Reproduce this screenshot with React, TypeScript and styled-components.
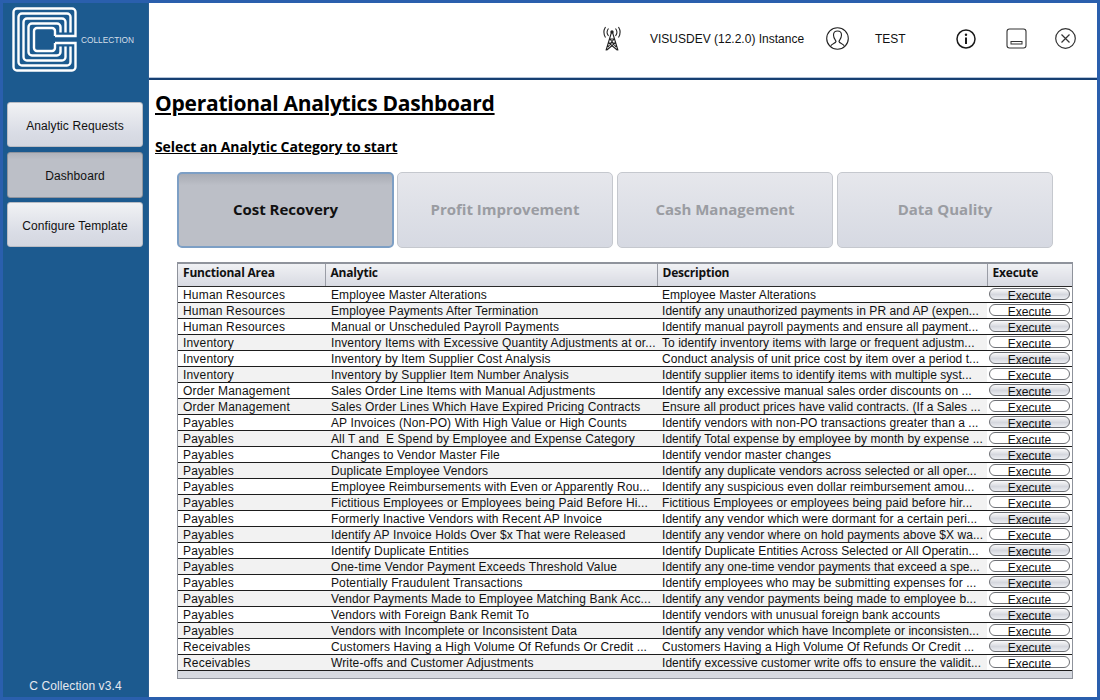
import * as React from 'react';
import styled, { createGlobalStyle } from 'styled-components';

const GlobalStyle = createGlobalStyle`
    html, body {
        margin: 0;
        padding: 0;
        background: #fff;
    }
    * {
        box-sizing: border-box;
    }
`;

const Frame = styled.div`
    width: 1100px;
    height: 700px;
    display: flex;
    overflow: hidden;
    background: #fff;
    border: 3px solid #2a5fad;
    font-family: 'Liberation Sans', Arial, sans-serif;
    color: #111;
`;

const Sidebar = styled.aside`
    width: 146px;
    flex-shrink: 0;
    display: flex;
    flex-direction: column;
    background: #1c5a8f;
    border-right: 1px solid #2b5f93;
    padding: 4px 4px 0;
`;

const LogoBox = styled.div`
    height: 95px;
    display: flex;
    align-items: flex-start;
    padding-left: 5px;
    flex-shrink: 0;
`;

const NavList = styled.nav`
    display: flex;
    flex-direction: column;
    gap: 4px;
`;

const NavButton = styled.button<{ $active?: boolean }>`
    width: 136px;
    height: ${(p) => (p.$active ? 46 : 45)}px;
    margin-top: ${(p) => (p.$active ? 1 : 0)}px;
    padding: 2px 0 0;
    border: 1px solid ${(p) => (p.$active ? '#8f949e' : '#b9bcc4')};
    border-radius: 3px;
    background: ${(p) =>
        p.$active
            ? 'linear-gradient(#b0b3bb, #bcbfc7 15%, #bcbfc7)'
            : 'linear-gradient(#f1f2f4, #d9dce5 70%, #d4d7e0)'};
    font: 12px 'Liberation Sans', Arial, sans-serif;
    letter-spacing: 0.1px;
    color: #111;
`;

const Version = styled.div`
    margin-top: auto;
    height: 18px;
    text-align: center;
    font-size: 12px;
    letter-spacing: 0.1px;
    color: #e4e9ef;
`;

const Main = styled.main`
    flex: 1;
    min-width: 0;
    display: flex;
    flex-direction: column;
`;

const TopBar = styled.header`
    height: 77px;
    flex-shrink: 0;
    display: flex;
    align-items: center;
    padding-bottom: 4px;
    border-bottom: 2px solid #173f72;
    box-shadow: inset 0 -1px 0 #b5c5da;
    font-size: 12px;
`;

const TopItems = styled.div`
    margin-left: auto;
    display: flex;
    align-items: center;
`;

const IconSlot = styled.span<{ $width: number; $gap: number }>`
    display: flex;
    justify-content: center;
    width: ${(p) => p.$width}px;
    margin-right: ${(p) => p.$gap}px;
`;

const TopLabel = styled.span<{ $width: number }>`
    width: ${(p) => p.$width}px;
    white-space: nowrap;
`;

const Content = styled.div`
    flex: 1;
    min-height: 0;
    padding: 8px 24px 0 6px;
`;

const Title = styled.h1`
    margin: 0;
    font: bold 21px/30px 'Open Sans', 'DejaVu Sans', sans-serif;
    letter-spacing: -0.25px;
    text-decoration: underline;
    color: #000;
`;

const Subtitle = styled.h2`
    margin: 20px 0 0;
    font: bold 14px/18px 'Open Sans', 'DejaVu Sans', sans-serif;
    letter-spacing: -0.1px;
    text-decoration: underline;
    color: #000;
`;

const TabRow = styled.div`
    display: flex;
    gap: 3px;
    margin: 16px 0 14px 22px;
`;

const Tab = styled.button<{ $active?: boolean }>`
    width: 217px;
    height: 76px;
    padding: 0 0 3px;
    border-radius: 5px;
    border: ${(p) => (p.$active ? '2px solid #7d9fc5' : '1px solid #c5c8ce')};
    background: ${(p) =>
        p.$active
            ? 'linear-gradient(#a9acb4, #bcbfc7 16%, #bcbfc7)'
            : 'linear-gradient(#e6e7ec, #d6d9e2)'};
    font: bold 15px 'Open Sans', 'DejaVu Sans', sans-serif;
    color: ${(p) => (p.$active ? '#111' : '#9a9ca2')};
    & + & {
        width: 216px;
    }
    &:nth-child(n + 3) {
        margin-left: 1px;
    }
`;

const TableBox = styled.div`
    width: 896px;
    margin-left: 22px;
    border: 1px solid #8f939c;
    border-top-width: 2px;
    background: #d6d9e0;
`;

const Grid = styled.table`
    width: 100%;
    border-collapse: collapse;
    table-layout: fixed;
    font-size: 12px;
`;

const HeadCell = styled.th`
    height: 22px;
    padding: 0 0 4px 5px;
    text-align: left;
    font: bold 12px 'Open Sans', 'DejaVu Sans', sans-serif;
    letter-spacing: -0.2px;
    color: #111;
    background: linear-gradient(#f0f1f4, #d8dae2);
    border-left: 1px solid #9a9da6;
    border-bottom: 1px solid #2a2a2a;
    &:first-child {
        border-left: 0;
    }
`;

const Row = styled.tr<{ $shaded: boolean }>`
    background: ${(p) => (p.$shaded ? '#f2f2f2' : '#fff')};
    border-bottom: 1px solid #1d1d1d;
`;

const Cell = styled.td<{ $spacing: number; $inset: number }>`
    height: 16px;
    padding: 1px 0 0 ${(p) => p.$inset}px;
    line-height: 14px;
    letter-spacing: ${(p) => p.$spacing}px;
    white-space: nowrap;
    overflow: hidden;
`;

const ActionCell = styled.td`
    height: 16px;
    padding: 1px 2px 0 1px;
    vertical-align: top;
    background: #fff;
`;

const ExecuteButton = styled.button<{ $shaded: boolean }>`
    display: block;
    width: 81px;
    height: 12px;
    margin-left: 1px;
    padding: 2px 0 0;
    border: 1px solid #6d6f74;
    border-radius: 6px;
    background: ${(p) =>
        p.$shaded ? 'linear-gradient(#fafafb, #d5d7de 55%, #eceef2)' : '#fff'};
    font: 12px/11px 'Liberation Sans', Arial, sans-serif;
    color: #111;
`;

const TableFoot = styled.div`
    height: 7px;
`;

const LogoMark = () => (
    <svg width="128" height="70" viewBox="0 0 128 70" fill="none" stroke="#fff" strokeWidth="2.4">
        <path d="M43 29H63.500V5A3.500 3.500 0 0 0 60 1.500H5A3.500 3.500 0 0 0 1.500 5V60A3.500 3.500 0 0 0 5 63.500H60A3.500 3.500 0 0 0 63.500 60V36H43" />
        <path d="M58.500 25.500V10A3.500 3.500 0 0 0 55 6.500H10A3.500 3.500 0 0 0 6.500 10V55A3.500 3.500 0 0 0 10 58.500H55A3.500 3.500 0 0 0 58.500 55V39.500" />
        <path d="M53.500 25.500V15A3.500 3.500 0 0 0 50 11.500H15A3.500 3.500 0 0 0 11.500 15V50A3.500 3.500 0 0 0 15 53.500H50A3.500 3.500 0 0 0 53.500 50V39.500" />
        <path d="M48.500 25.500V20A3.500 3.500 0 0 0 45 16.500H20A3.500 3.500 0 0 0 16.500 20V45A3.500 3.500 0 0 0 20 48.500H45A3.500 3.500 0 0 0 48.500 45V39.500" />
        <path d="M43 29V24A3 3 0 0 0 40 21H25A3 3 0 0 0 22 24V41A3 3 0 0 0 25 44H40A3 3 0 0 0 43 41V36" />
        <text x="69" y="36" fill="#d4dfe9" stroke="none" fontSize="8.300" fontFamily="Liberation Sans, Arial, sans-serif">COLLECTION</text>
    </svg>
);

const TowerIcon = () => (
    <svg width="24" height="26" viewBox="0 0 24 26" fill="none" stroke="#222" strokeWidth="1.100">
        <circle cx="12" cy="6" r="1.700" fill="#222" stroke="none" />
        <path d="M11.300 7 6 24.500M12.700 7 18 24.500M10 13h4M8.800 17h6.400M10 13l6 8M14 13l-6 8M8.800 17l8.400 7M15.200 17l-8.400 7" />
        <path d="M8.500 2.500a6 6 0 0 0 0 7.500M5.500 1a10 10 0 0 0 0 10.500M15.500 2.500a6 6 0 0 1 0 7.500M18.500 1a10 10 0 0 1 0 10.500" />
    </svg>
);

const UserIcon = () => (
    <svg width="23" height="23" viewBox="0 0 23 23" fill="none" stroke="#222" strokeWidth="1.100">
        <circle cx="11.500" cy="11.500" r="10.800" />
        <path d="M4.500 19.500c.5-3 5-3 5.500-5 .2-1-2.500-2.500-2.500-6.500 0-2.800 1.700-4 4-4s4 1.200 4 4c0 4-2.700 5.500-2.500 6.500.5 2 5 2 5.500 5" />
    </svg>
);

const InfoIcon = () => (
    <svg width="20" height="20" viewBox="0 0 20 20" fill="none" stroke="#1a1a1a">
        <circle cx="10" cy="10" r="9" strokeWidth="1.500" />
        <circle cx="10" cy="5.800" r="1.200" fill="#1a1a1a" stroke="none" />
        <path d="M10 8.500v6.500" strokeWidth="2" />
    </svg>
);

const MinimizeIcon = () => (
    <svg width="21" height="21" viewBox="0 0 21 21" fill="none" stroke="#333">
        <rect x="1" y="1" width="19" height="19" rx="2.500" strokeWidth="1.100" />
        <rect x="5" y="13.500" width="11" height="2.500" strokeWidth="1" />
    </svg>
);

const CloseIcon = () => (
    <svg width="21" height="21" viewBox="0 0 21 21" fill="none" stroke="#333" strokeWidth="1.200">
        <circle cx="10.500" cy="10.500" r="9.800" />
        <path d="m6.500 6.500 8 8M14.500 6.500l-8 8" />
    </svg>
);

const navItems = ['Analytic Requests', 'Dashboard', 'Configure Template'];
const categories = ['Cost Recovery', 'Profit Improvement', 'Cash Management', 'Data Quality'];

const rows: [string, string, string][] = [
    ['Human Resources', 'Employee Master Alterations', 'Employee Master Alterations'],
    ['Human Resources', 'Employee Payments After Termination', 'Identify any unauthorized payments in PR and AP (expen...'],
    ['Human Resources', 'Manual or Unscheduled Payroll Payments', 'Identify manual payroll payments and ensure all payment...'],
    ['Inventory', 'Inventory Items with Excessive Quantity Adjustments at or...', 'To identify inventory items with large or frequent adjustm...'],
    ['Inventory', 'Inventory by Item Supplier Cost Analysis', 'Conduct analysis of unit price cost by item over a period t...'],
    ['Inventory', 'Inventory by Supplier Item Number Analysis', 'Identify supplier items to identify items with multiple syst...'],
    ['Order Management', 'Sales Order Line Items with Manual Adjustments', 'Identify any excessive manual sales order discounts on ...'],
    ['Order Management', 'Sales Order Lines Which Have Expired Pricing Contracts', 'Ensure all product prices have valid contracts. (If a Sales ...'],
    ['Payables', 'AP Invoices (Non-PO) With High Value or High Counts', 'Identify vendors with non-PO transactions greater than a ...'],
    ['Payables', 'All T and\u00a0 E Spend by Employee and Expense Category', 'Identify Total expense by employee by month by expense ...'],
    ['Payables', 'Changes to Vendor Master File', 'Identify vendor master changes'],
    ['Payables', 'Duplicate Employee Vendors', 'Identify any duplicate vendors across selected or all oper...'],
    ['Payables', 'Employee Reimbursements with Even or Apparently Rou...', 'Identify any suspicious even dollar reimbursement amou...'],
    ['Payables', 'Fictitious Employees or Employees being Paid Before Hi...', 'Fictitious Employees or employees being paid before hir...'],
    ['Payables', 'Formerly Inactive Vendors with Recent AP Invoice', 'Identify any vendor which were dormant for a certain peri...'],
    ['Payables', 'Identify AP Invoice Holds Over $x That were Released', 'Identify any vendor where on hold payments above $X wa...'],
    ['Payables', 'Identify Duplicate Entities', 'Identify Duplicate Entities Across Selected or All Operatin...'],
    ['Payables', 'One-time Vendor Payment Exceeds Threshold Value', 'Identify any one-time vendor payments that exceed a spe...'],
    ['Payables', 'Potentially Fraudulent Transactions', 'Identify employees who may be submitting expenses for ...'],
    ['Payables', 'Vendor Payments Made to Employee Matching Bank Acc...', 'Identify any vendor payments being made to employee b...'],
    ['Payables', 'Vendors with Foreign Bank Remit To', 'Identify vendors with unusual foreign bank accounts'],
    ['Payables', 'Vendors with Incomplete or Inconsistent Data', 'Identify any vendor which have Incomplete or inconsisten...'],
    ['Receivables', 'Customers Having a High Volume Of Refunds Or Credit ...', 'Customers Having a High Volume Of Refunds Or Credit ...'],
    ['Receivables', 'Write-offs and Customer Adjustments', 'Identify excessive customer write offs to ensure the validit...'],
];

export default function App() {
    return (
        <Frame>
            <GlobalStyle />
            <Sidebar>
                <LogoBox>
                    <LogoMark />
                </LogoBox>
                <NavList>
                    {navItems.map((item) => (
                        <NavButton key={item} $active={item === 'Dashboard'}>
                            {item}
                        </NavButton>
                    ))}
                </NavList>
                <Version>C Collection v3.4</Version>
            </Sidebar>
            <Main>
                <TopBar>
                    <TopItems>
                        <IconSlot $width={24} $gap={26}>
                            <TowerIcon />
                        </IconSlot>
                        <TopLabel $width={176}>VISUSDEV (12.2.0) Instance</TopLabel>
                        <IconSlot $width={23} $gap={26}>
                            <UserIcon />
                        </IconSlot>
                        <TopLabel $width={81}>TEST</TopLabel>
                        <IconSlot $width={20} $gap={30}>
                            <InfoIcon />
                        </IconSlot>
                        <IconSlot $width={21} $gap={28}>
                            <MinimizeIcon />
                        </IconSlot>
                        <IconSlot $width={21} $gap={21}>
                            <CloseIcon />
                        </IconSlot>
                    </TopItems>
                </TopBar>
                <Content>
                    <Title>Operational Analytics Dashboard</Title>
                    <Subtitle>Select an Analytic Category to start</Subtitle>
                    <TabRow>
                        {categories.map((name, i) => (
                            <Tab key={name} $active={i === 0}>
                                {name}
                            </Tab>
                        ))}
                    </TabRow>
                    <TableBox>
                        <Grid>
                            <colgroup>
                                <col width="147" />
                                <col width="332" />
                                <col width="330" />
                                <col width="85" />
                            </colgroup>
                            <thead>
                                <tr>
                                    <HeadCell>Functional Area</HeadCell>
                                    <HeadCell>Analytic</HeadCell>
                                    <HeadCell>Description</HeadCell>
                                    <HeadCell>Execute</HeadCell>
                                </tr>
                            </thead>
                            <tbody>
                                {rows.map(([area, analytic, description], i) => (
                                    <Row key={analytic} $shaded={i % 2 === 1}>
                                        <Cell $inset={5} $spacing={0.18}>{area}</Cell>
                                        <Cell $inset={6} $spacing={0.12}>{analytic}</Cell>
                                        <Cell $inset={5} $spacing={0.05}>{description}</Cell>
                                        <ActionCell>
                                            <ExecuteButton $shaded={i % 2 === 0}>Execute</ExecuteButton>
                                        </ActionCell>
                                    </Row>
                                ))}
                            </tbody>
                        </Grid>
                        <TableFoot />
                    </TableBox>
                </Content>
            </Main>
        </Frame>
    );
}
